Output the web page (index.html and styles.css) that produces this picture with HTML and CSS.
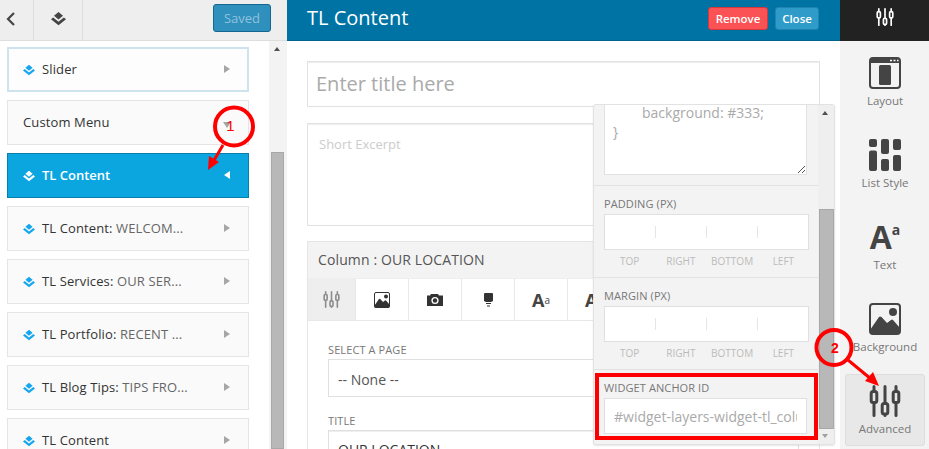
FILE: index.html
```html
<!DOCTYPE html>
<html lang="en">
<head>
<meta charset="utf-8">
<title>TL Content</title>
<link rel="stylesheet" href="styles.css">
</head>
<body>
<svg class="defs" width="0" height="0">
  <defs>
    <symbol id="layers" viewBox="0 0 12 12">
      <path d="M6 0.800 L9.600 3.800 L6 6.800 L2.400 3.800Z" fill="currentColor"/>
      <path d="M1.700 5.100 L0 6.500 L6 11.300 L12 6.500 L10.300 5.100 L6 8.500Z" fill="currentColor"/>
    </symbol>
    <symbol id="sliders" viewBox="0 0 32 32">
      <g fill="none" stroke="currentColor" stroke-width="3" stroke-linecap="round">
        <path d="M5 1.500V6M5 18V30.500M16 1.500V18M16 30V30.500M27 1.500V6M27 18V30.500"/>
        <rect x="2.200" y="6.500" width="5.600" height="11" rx="2"/>
        <rect x="13.200" y="18.500" width="5.600" height="10.500" rx="2"/>
        <rect x="24.200" y="6.500" width="5.600" height="11" rx="2"/>
      </g>
    </symbol>
    <symbol id="picture" viewBox="0 0 32 32">
      <rect x="1" y="1" width="30" height="30" rx="3" fill="none" stroke="currentColor" stroke-width="2"/>
      <circle cx="24" cy="9" r="4" fill="currentColor"/>
      <path d="M1 27 L10 14 Q11 13 12.500 14 L18 20 L22 17 Q23 16 24 17 L31 25 V31 H1Z" fill="currentColor"/>
    </symbol>
    <symbol id="camera" viewBox="0 0 16 12">
      <path d="M0 1.500H3L4 0H11L12 1.500H16V12H0Z" fill="currentColor"/>
      <circle cx="8" cy="6.500" r="3.600" fill="#fff"/>
      <circle cx="8" cy="6.500" r="2.200" fill="currentColor"/>
    </symbol>
    <symbol id="lamp" viewBox="0 0 9 14">
      <path d="M0 1 Q0 0 1 0H8Q9 0 9 1V8L7 9H2L0 8Z" fill="currentColor"/>
      <path d="M2 10.500H7M3 13H6" stroke="currentColor" stroke-width="1.200"/>
    </symbol>
  </defs>
</svg>

<div class="app">
  <aside class="sidebar">
    <header class="side-head">
      <button class="side-tool back" type="button" aria-label="Back">
        <svg width="10" height="16" viewBox="0 0 10 16"><path d="M8 2 L2 8 L8 14" fill="none" stroke="currentColor" stroke-width="2.200"/></svg>
      </button>
      <button class="side-tool" type="button" aria-label="Layers">
        <svg width="15" height="15"><use href="#layers"/></svg>
      </button>
      <button class="saved" type="button">Saved</button>
    </header>
    <div class="side-body">
      <ul class="widget-list">
        <li class="widget focused"><svg class="w-ico" width="12" height="12"><use href="#layers"/></svg><span class="w-name">Slider</span><i class="tri right"></i></li>
        <li class="widget plain"><span class="w-name">Custom Menu</span><i class="tri down"></i></li>
        <li class="widget active"><svg class="w-ico" width="12" height="12"><use href="#layers"/></svg><span class="w-name">TL Content</span><i class="tri left"></i></li>
        <li class="widget"><svg class="w-ico" width="12" height="12"><use href="#layers"/></svg><span class="w-name">TL Content: <em>WELCOM...</em></span><i class="tri right"></i></li>
        <li class="widget"><svg class="w-ico" width="12" height="12"><use href="#layers"/></svg><span class="w-name">TL Services: <em>OUR SER...</em></span><i class="tri right"></i></li>
        <li class="widget"><svg class="w-ico" width="12" height="12"><use href="#layers"/></svg><span class="w-name">TL Portfolio: <em>RECENT ...</em></span><i class="tri right"></i></li>
        <li class="widget"><svg class="w-ico" width="12" height="12"><use href="#layers"/></svg><span class="w-name">TL Blog Tips: <em>TIPS FRO...</em></span><i class="tri right"></i></li>
        <li class="widget"><svg class="w-ico" width="12" height="12"><use href="#layers"/></svg><span class="w-name">TL Content</span><i class="tri right"></i></li>
      </ul>
      <div class="scrollbar side-scroll">
        <i class="sb-up"></i>
        <div class="sb-thumb"></div>
      </div>
    </div>
  </aside>

  <main class="editor">
    <header class="ed-head">
      <h1 class="ed-title">TL Content</h1>
      <button class="btn remove" type="button">Remove</button>
      <button class="btn close" type="button">Close</button>
    </header>
    <div class="ed-body">
      <div class="title-field">Enter title here</div>
      <div class="excerpt-field">Short Excerpt</div>
      <section class="column">
        <h2 class="col-head">Column : OUR LOCATION</h2>
        <div class="tabs">
          <div class="tab first"><svg width="17" height="17"><use href="#sliders"/></svg></div>
          <div class="tab"><svg width="16" height="16"><use href="#picture"/></svg></div>
          <div class="tab"><svg width="16" height="12"><use href="#camera"/></svg></div>
          <div class="tab"><svg width="9" height="14"><use href="#lamp"/></svg></div>
          <div class="tab font-tab">A<sup>a</sup></div>
          <div class="tab font-tab">A<sup>a</sup></div>
        </div>
        <div class="col-form">
          <label class="f-label">SELECT A PAGE</label>
          <div class="f-input">-- None --</div>
          <label class="f-label second">TITLE</label>
          <div class="f-input dark">OUR LOCATION</div>
        </div>
      </section>
    </div>
  </main>

  <nav class="rail">
    <div class="rail-top">
      <svg width="18" height="18"><use href="#sliders"/></svg>
    </div>
    <div class="rail-items">
      <div class="rail-item">
        <svg width="32" height="32" viewBox="0 0 32 32">
          <rect x="1" y="1" width="30" height="30" rx="3" fill="none" stroke="#444" stroke-width="2"/>
          <path d="M1 1H31V6H1Z" fill="#444"/>
          <path d="M21 3.500h2M24.500 3.500h2M28 3.500h1.500" stroke="#fff" stroke-width="1.600"/>
          <rect x="10" y="8" width="12" height="20" rx="1.500" fill="#444"/>
        </svg>
        <span>Layout</span>
      </div>
      <div class="rail-item">
        <svg width="32" height="32" viewBox="0 0 32 32" fill="#444">
          <rect x="0" y="0" width="8" height="8" rx="2"/>
          <rect x="12" y="0" width="8" height="15" rx="2"/>
          <rect x="24" y="0" width="8" height="11" rx="2"/>
          <rect x="0" y="11.500" width="8" height="20.500" rx="2"/>
          <rect x="12" y="20" width="8" height="12" rx="2"/>
          <rect x="24" y="16" width="8" height="16" rx="2"/>
        </svg>
        <span>List Style</span>
      </div>
      <div class="rail-item">
        <div class="big-a">A<sup>a</sup></div>
        <span>Text</span>
      </div>
      <div class="rail-item">
        <svg width="32" height="32"><use href="#picture"/></svg>
        <span>Background</span>
      </div>
      <div class="rail-item current">
        <svg width="32" height="32"><use href="#sliders"/></svg>
        <span>Advanced</span>
      </div>
    </div>
  </nav>

  <div class="popover">
    <div class="pop-main">
      <section class="pop-sec css-sec">
        <div class="css-area">
          <p class="css-line indent">background: #333;</p>
          <p class="css-line">}</p>
          <svg class="grip" width="8" height="8" viewBox="0 0 8 8"><path d="M1 8L8 1M5 8L8 5" stroke="#555" stroke-width="1"/></svg>
        </div>
      </section>
      <section class="pop-sec">
        <h3 class="pop-label">PADDING (PX)</h3>
        <div class="quad">
          <i></i><i></i><i></i><i></i>
        </div>
        <div class="quad-labels"><span>TOP</span><span>RIGHT</span><span>BOTTOM</span><span>LEFT</span></div>
      </section>
      <section class="pop-sec">
        <h3 class="pop-label">MARGIN (PX)</h3>
        <div class="quad">
          <i></i><i></i><i></i><i></i>
        </div>
        <div class="quad-labels"><span>TOP</span><span>RIGHT</span><span>BOTTOM</span><span>LEFT</span></div>
      </section>
      <section class="pop-sec anchor-sec">
        <h3 class="pop-label">WIDGET ANCHOR ID</h3>
        <div class="anchor-input"><span>#widget-layers-widget-tl_column-1</span></div>
      </section>
    </div>
    <div class="scrollbar pop-scroll">
      <i class="sb-up"></i>
      <div class="sb-thumb"></div>
      <i class="sb-down"></i>
    </div>
  </div>

  <div class="callout-box"></div>

  <svg class="annot" width="929" height="449" viewBox="0 0 929 449">
    <circle cx="234" cy="126.500" r="19" fill="none" stroke="#f00" stroke-width="4"/>
    <path d="M223 145 L213 162" stroke="#f00" stroke-width="3"/>
    <path d="M208 170 L209 156 L219 162Z" fill="#f00"/>
    <text class="annot-num one" x="230.500" y="131" text-anchor="middle">1</text>
    <circle cx="834" cy="347.500" r="17.500" fill="none" stroke="#f00" stroke-width="4"/>
    <path d="M848 360 L871 379" stroke="#f00" stroke-width="3"/>
    <path d="M879 386 L865 381 L873 372Z" fill="#f00"/>
    <text class="annot-num" x="835" y="353" text-anchor="middle">2</text>
  </svg>
</div>
</body>
</html>
```

FILE: styles.css
```css
* { box-sizing: border-box; }
html, body { margin: 0; padding: 0; height: 100%; overflow: hidden; }
body { font-family: "Open Sans", "Noto Sans", sans-serif; color: #333; background: #fff; }
.defs { position: absolute; }
.app { position: relative; display: flex; width: 929px; height: 449px; overflow: hidden; }
button { font-family: inherit; cursor: pointer; }

/* Sidebar */
.sidebar { width: 287px; flex: none; display: flex; flex-direction: column; background: #fff; }
.side-head { height: 41px; flex: none; display: flex; align-items: center; background: #eee; border-bottom: 1px solid #ddd; }
.side-tool { width: 49px; height: 40px; padding: 0 0 3px; background: none; border: 0; border-right: 1px solid #ddd; color: #444; display: flex; align-items: center; justify-content: center; }
.side-tool.back { width: 34px; padding-right: 11px; }
.saved { margin-left: auto; margin-right: 16px; margin-top: -4px; width: 58px; height: 28px; padding: 0; font-size: 13px; color: #8fc3de; background: #2f8fbd; border: 1px solid #14688f; border-radius: 3px; }
.side-body { flex: 1; display: flex; min-height: 0; position: relative; }
.widget-list { list-style: none; margin: 0; padding: 6px 0 0 7px; width: 269px; display: flex; flex-direction: column; gap: 8px; }
.widget { width: 242px; height: 45px; flex: none; display: flex; align-items: center; padding-left: 15px; background: #fafafa; border: 1px solid #e5e5e5; font-size: 13px; font-weight: 500; letter-spacing: .12px; color: #333; position: relative; }
.widget.focused { border: 2px solid #cfe3ee; background: #fdfdfd; padding-left: 14px; }
.widget.active { background: #0ba5df; border-color: #0a7fae; color: #fff; font-weight: 600; letter-spacing: 0; }
.w-ico { color: #16a6ee; margin-right: 7px; flex: none; }
.active .w-ico { color: #fff; }
.w-name { white-space: nowrap; margin-top: -2px; }
.plain .w-name { margin-top: -1px; }
.w-name em { font-style: normal; color: #666; }
.tri { position: absolute; right: 18px; top: 50%; margin-top: -5px; width: 0; height: 0; border-style: solid; border-color: transparent; }
.focused .tri { right: 17px; }
.tri.right { border-width: 4.500px 0 4.500px 6px; border-left-color: #a6a6a6; }
.tri.left { border-width: 4.500px 6px 4.500px 0; border-right-color: #fff; }
.tri.down { border-width: 6px 4.500px 0; border-top-color: #a6a6a6; right: 17px; margin-top: -1px; }

.scrollbar { position: relative; background: #f1f1f1; flex: none; }
.side-scroll { width: 18px; background: #f3f3f3; }
.side-scroll .sb-thumb { position: absolute; left: 2px; right: 3px; top: 111px; bottom: 0; background: #b8b8b8; border: 1px solid #a8a8a8; }
.sb-up { position: absolute; left: 50%; top: 6px; margin-left: -4px; width: 0; height: 0; border-style: solid; border-width: 0 3.500px 4px; border-color: transparent transparent #505050; }
.sb-down { position: absolute; left: 50%; bottom: 6px; margin-left: -4px; width: 0; height: 0; border-style: solid; border-width: 4px 3.500px 0; border-color: #a0a0a0 transparent transparent; }

/* Editor */
.editor { width: 553px; flex: none; display: flex; flex-direction: column; background: #fff; }
.ed-head { height: 41px; flex: none; display: flex; align-items: center; background: #0073a5; border-bottom: 1px solid #00618c; padding: 0 21px 4px 20px; }
.ed-title { margin: 0 auto 0 0; font-size: 20px; font-weight: 400; color: #fff; line-height: 1; }
.btn { height: 23px; padding: 0; border-radius: 3px; font-size: 11.500px; font-weight: 600; color: #fff; }
.remove { width: 60px; background: #fb5255; border: 1px solid #d9363a; }
.close { width: 44px; margin-left: 7px; background: #2f9bc9; border: 1px solid #1e84b0; }
.ed-body { padding: 20px 20px 0; flex: 1; min-height: 0; overflow: hidden; }
.title-field { height: 46px; border: 1px solid #e2e2e2; padding: 0 0 2px 8px; display: flex; align-items: center; font-size: 20px; color: #aaa; box-shadow: inset 0 1px 1px #eee; }
.excerpt-field { margin-top: 16px; height: 103px; border: 1px solid #e2e2e2; box-shadow: inset 0 1px 1px #eee; padding: 11px 11px; font-size: 13px; line-height: 18px; color: #ccc; }
.column { margin-top: 15px; border: 1px solid #e5e5e5; border-bottom: 0; }
.col-head { margin: 0; height: 37px; padding: 0 0 2px 10px; display: flex; align-items: center; background: #f3f3f3; font-size: 14px; font-weight: 500; letter-spacing: .12px; color: #555; border-bottom: 1px solid #eee; }
.tabs { display: flex; height: 42px; border-bottom: 1px solid #e8e8e8; overflow: hidden; }
.tab { width: 53px; flex: none; display: flex; align-items: center; justify-content: center; border-right: 1px solid #e8e8e8; color: #333; }
.tab.first { width: 48px; background: #eee; color: #8c8c8c; }
.font-tab { font-size: 18px; font-weight: 700; color: #444; line-height: 1; }
.font-tab sup { font-size: 10px; font-weight: 400; line-height: 1; vertical-align: 7px; }
.col-form { padding: 21px 20px 0; }
.f-label { display: block; font-size: 11px; font-weight: 500; letter-spacing: .1px; color: #777; line-height: 16px; }
.f-label.second { margin-top: 16px; }
.f-input { margin-top: 1px; height: 38px; border: 1px solid #e0e0e0; padding: 2px 9px 0; display: flex; align-items: center; font-size: 14px; color: #555; }
.f-input.dark { box-shadow: inset 0 1px 1px #eee; color: #333; padding-top: 0; }

/* Right rail */
.rail { width: 89px; flex: none; background: #f3f3f3; display: flex; flex-direction: column; }
.rail-top { height: 41px; flex: none; background: #222; color: #fff; display: flex; align-items: center; justify-content: center; padding-bottom: 8px; }
.rail-items { padding: 5px 4px 0 5px; display: flex; flex-direction: column; gap: 10px; }
.rail-item { height: 72px; flex: none; display: flex; flex-direction: column; align-items: center; padding-top: 10px; border: 1px solid transparent; border-radius: 3px; color: #444; }
.rail-item span { margin-top: 4px; font-size: 11.500px; line-height: 16px; color: #777; white-space: nowrap; }
.rail-item.current { background: #e8e8e8; border-color: #ddd; }
.big-a { height: 32px; font-size: 32px; font-weight: 700; color: #444; line-height: 32px; white-space: nowrap; }
.big-a sup { font-size: 14px; font-weight: 700; vertical-align: 14px; line-height: 1; }

/* Popover */
.popover { position: absolute; left: 593px; top: 104px; width: 242px; height: 341px; display: flex; background: #f3f3f3; border: 1px solid #e2e2e2; border-radius: 3px; box-shadow: 0 1px 2px rgba(0,0,0,.1); overflow: hidden; }
.pop-main { width: 224px; flex: none; }
.pop-sec { padding: 0 10px; border-bottom: 1px solid #e2e2e2; }
.css-sec { height: 81px; }
.css-area { position: relative; width: 203px; height: 70px; background: #fff; border: 1px solid #e2e2e2; border-top: 0; font-size: 14px; color: #aaa; padding-left: 8px; overflow: hidden; }
.css-line { margin: 1px 0 0; line-height: 20px; }
.css-line.indent { padding-left: 29px; margin-top: 0; line-height: 16px; }
.grip { position: absolute; right: 1px; bottom: 1px; }
.pop-label { margin: 0; padding-top: 10px; height: 28px; font-size: 11px; font-weight: 500; letter-spacing: .1px; line-height: 16px; color: #777; }
.quad { width: 205px; height: 36px; background: #fff; border: 1px solid #e0e0e0; display: flex; align-items: center; }
.quad i { flex: 1; height: 12px; border-right: 1px solid #e6e6e6; }
.quad i:last-child { border-right: 0; }
.quad-labels { display: flex; width: 205px; height: 27px; padding-top: 4px; font-size: 10px; color: #bbb; line-height: 14px; }
.quad-labels span { flex: 1; text-align: center; }
.anchor-sec { border-bottom: 0; }
.anchor-input { width: 203px; height: 36px; background: #fff; border: 1px solid #e0e0e0; padding: 0 9px; display: flex; align-items: center; font-size: 14px; color: #aaa; overflow: hidden; white-space: nowrap; }
.anchor-input span { display: block; overflow: hidden; }
.pop-scroll { width: 16px; flex: none; background: #efefef; }
.pop-scroll .sb-thumb { position: absolute; left: 1px; right: 0; top: 104px; height: 220px; background: #b8b8b8; border: 1px solid #a8a8a8; }

/* Callouts */
.callout-box { position: absolute; left: 595px; top: 373px; width: 223px; height: 67px; border: 4px solid #f00; pointer-events: none; }
.annot { position: absolute; left: 0; top: 0; pointer-events: none; }
.annot-num { font-family: "Liberation Sans", sans-serif; font-size: 14px; font-weight: 700; fill: #f00; }
.annot-num.one { font-size: 15px; font-weight: 400; }
```
